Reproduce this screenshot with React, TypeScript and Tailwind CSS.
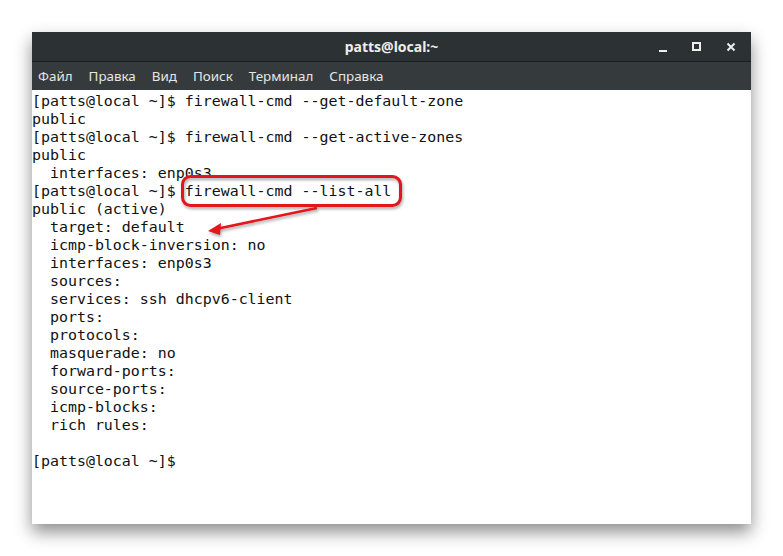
import React from "react";

const lines = [
  "[patts@local ~]$ firewall-cmd --get-default-zone",
  "public",
  "[patts@local ~]$ firewall-cmd --get-active-zones",
  "public",
  "  interfaces: enp0s3",
  "[patts@local ~]$ firewall-cmd --list-all",
  "public (active)",
  "  target: default",
  "  icmp-block-inversion: no",
  "  interfaces: enp0s3",
  "  sources:",
  "  services: ssh dhcpv6-client",
  "  ports:",
  "  protocols:",
  "  masquerade: no",
  "  forward-ports:",
  "  source-ports:",
  "  icmp-blocks:",
  "  rich rules:",
  "",
  "[patts@local ~]$",
];

const menu = ["Файл", "Правка", "Вид", "Поиск", "Терминал", "Справка"];

export default function App() {
  return (
    <div className="w-[783px] h-[556px] bg-white pt-[32px] pl-[32px]">
      <div className="w-[719px] h-[492px] flex flex-col bg-white shadow-[0_8px_16px_rgba(0,0,0,0.45)] relative">
        <div className="h-[30px] bg-[#2c3133] border-b border-[#1c1f20] relative flex items-center justify-center">
          <span
            className="text-[14px] font-bold text-[#eeeeec]"
            style={{ fontFamily: '"Noto Sans", sans-serif' }}
          >
            patts@local:~
          </span>
          <div className="absolute right-[14px] top-0 h-full flex items-center gap-[22px]">
            <svg width="12" height="12" viewBox="0 0 12 12">
              <rect x="2" y="9" width="8" height="2" fill="#eeeeec" />
            </svg>
            <svg width="12" height="12" viewBox="0 0 12 12">
              <rect x="2" y="2" width="7" height="7" fill="none" stroke="#eeeeec" strokeWidth="2" />
            </svg>
            <svg width="12" height="12" viewBox="0 0 12 12">
              <path d="M2.5 2.5 L9.5 9.5 M9.5 2.5 L2.5 9.5" stroke="#eeeeec" strokeWidth="2" />
            </svg>
          </div>
        </div>
        <div
          className="h-[28px] bg-[#353b3d] flex items-center pl-[6px] gap-[16px] text-[13.4px] text-[#e6e6e4] pt-[1px]"
          style={{ fontFamily: '"Noto Sans", sans-serif' }}
        >
          {menu.map((m) => (
            <span key={m}>{m}</span>
          ))}
        </div>
        <div
          className="flex-1 pt-[2px] text-[14.93px] leading-[18px] text-[#111] whitespace-pre"
          style={{ fontFamily: '"DejaVu Sans Mono", monospace' }}
        >
          {lines.map((l, i) => (
            <div key={i} className="h-[18px]">
              {l}
            </div>
          ))}
        </div>
        <svg
          className="absolute left-0 top-0 pointer-events-none"
          width="719"
          height="492"
          viewBox="0 0 719 492"
        >
          <defs>
            <filter id="sh" x="-20%" y="-20%" width="140%" height="160%">
              <feDropShadow dx="1" dy="2" stdDeviation="1.5" floodColor="#000" floodOpacity="0.35" />
            </filter>
          </defs>
          <g filter="url(#sh)">
            <rect x="150.5" y="144.5" width="218" height="29" rx="8" fill="none" stroke="#e3141b" strokeWidth="3" />
            <path d="M285 176 L184 197" stroke="#e3141b" strokeWidth="2.5" fill="none" />
            <path d="M176 199 L189 191 L188 203 Z" fill="#e3141b" />
          </g>
        </svg>
      </div>
    </div>
  );
}
